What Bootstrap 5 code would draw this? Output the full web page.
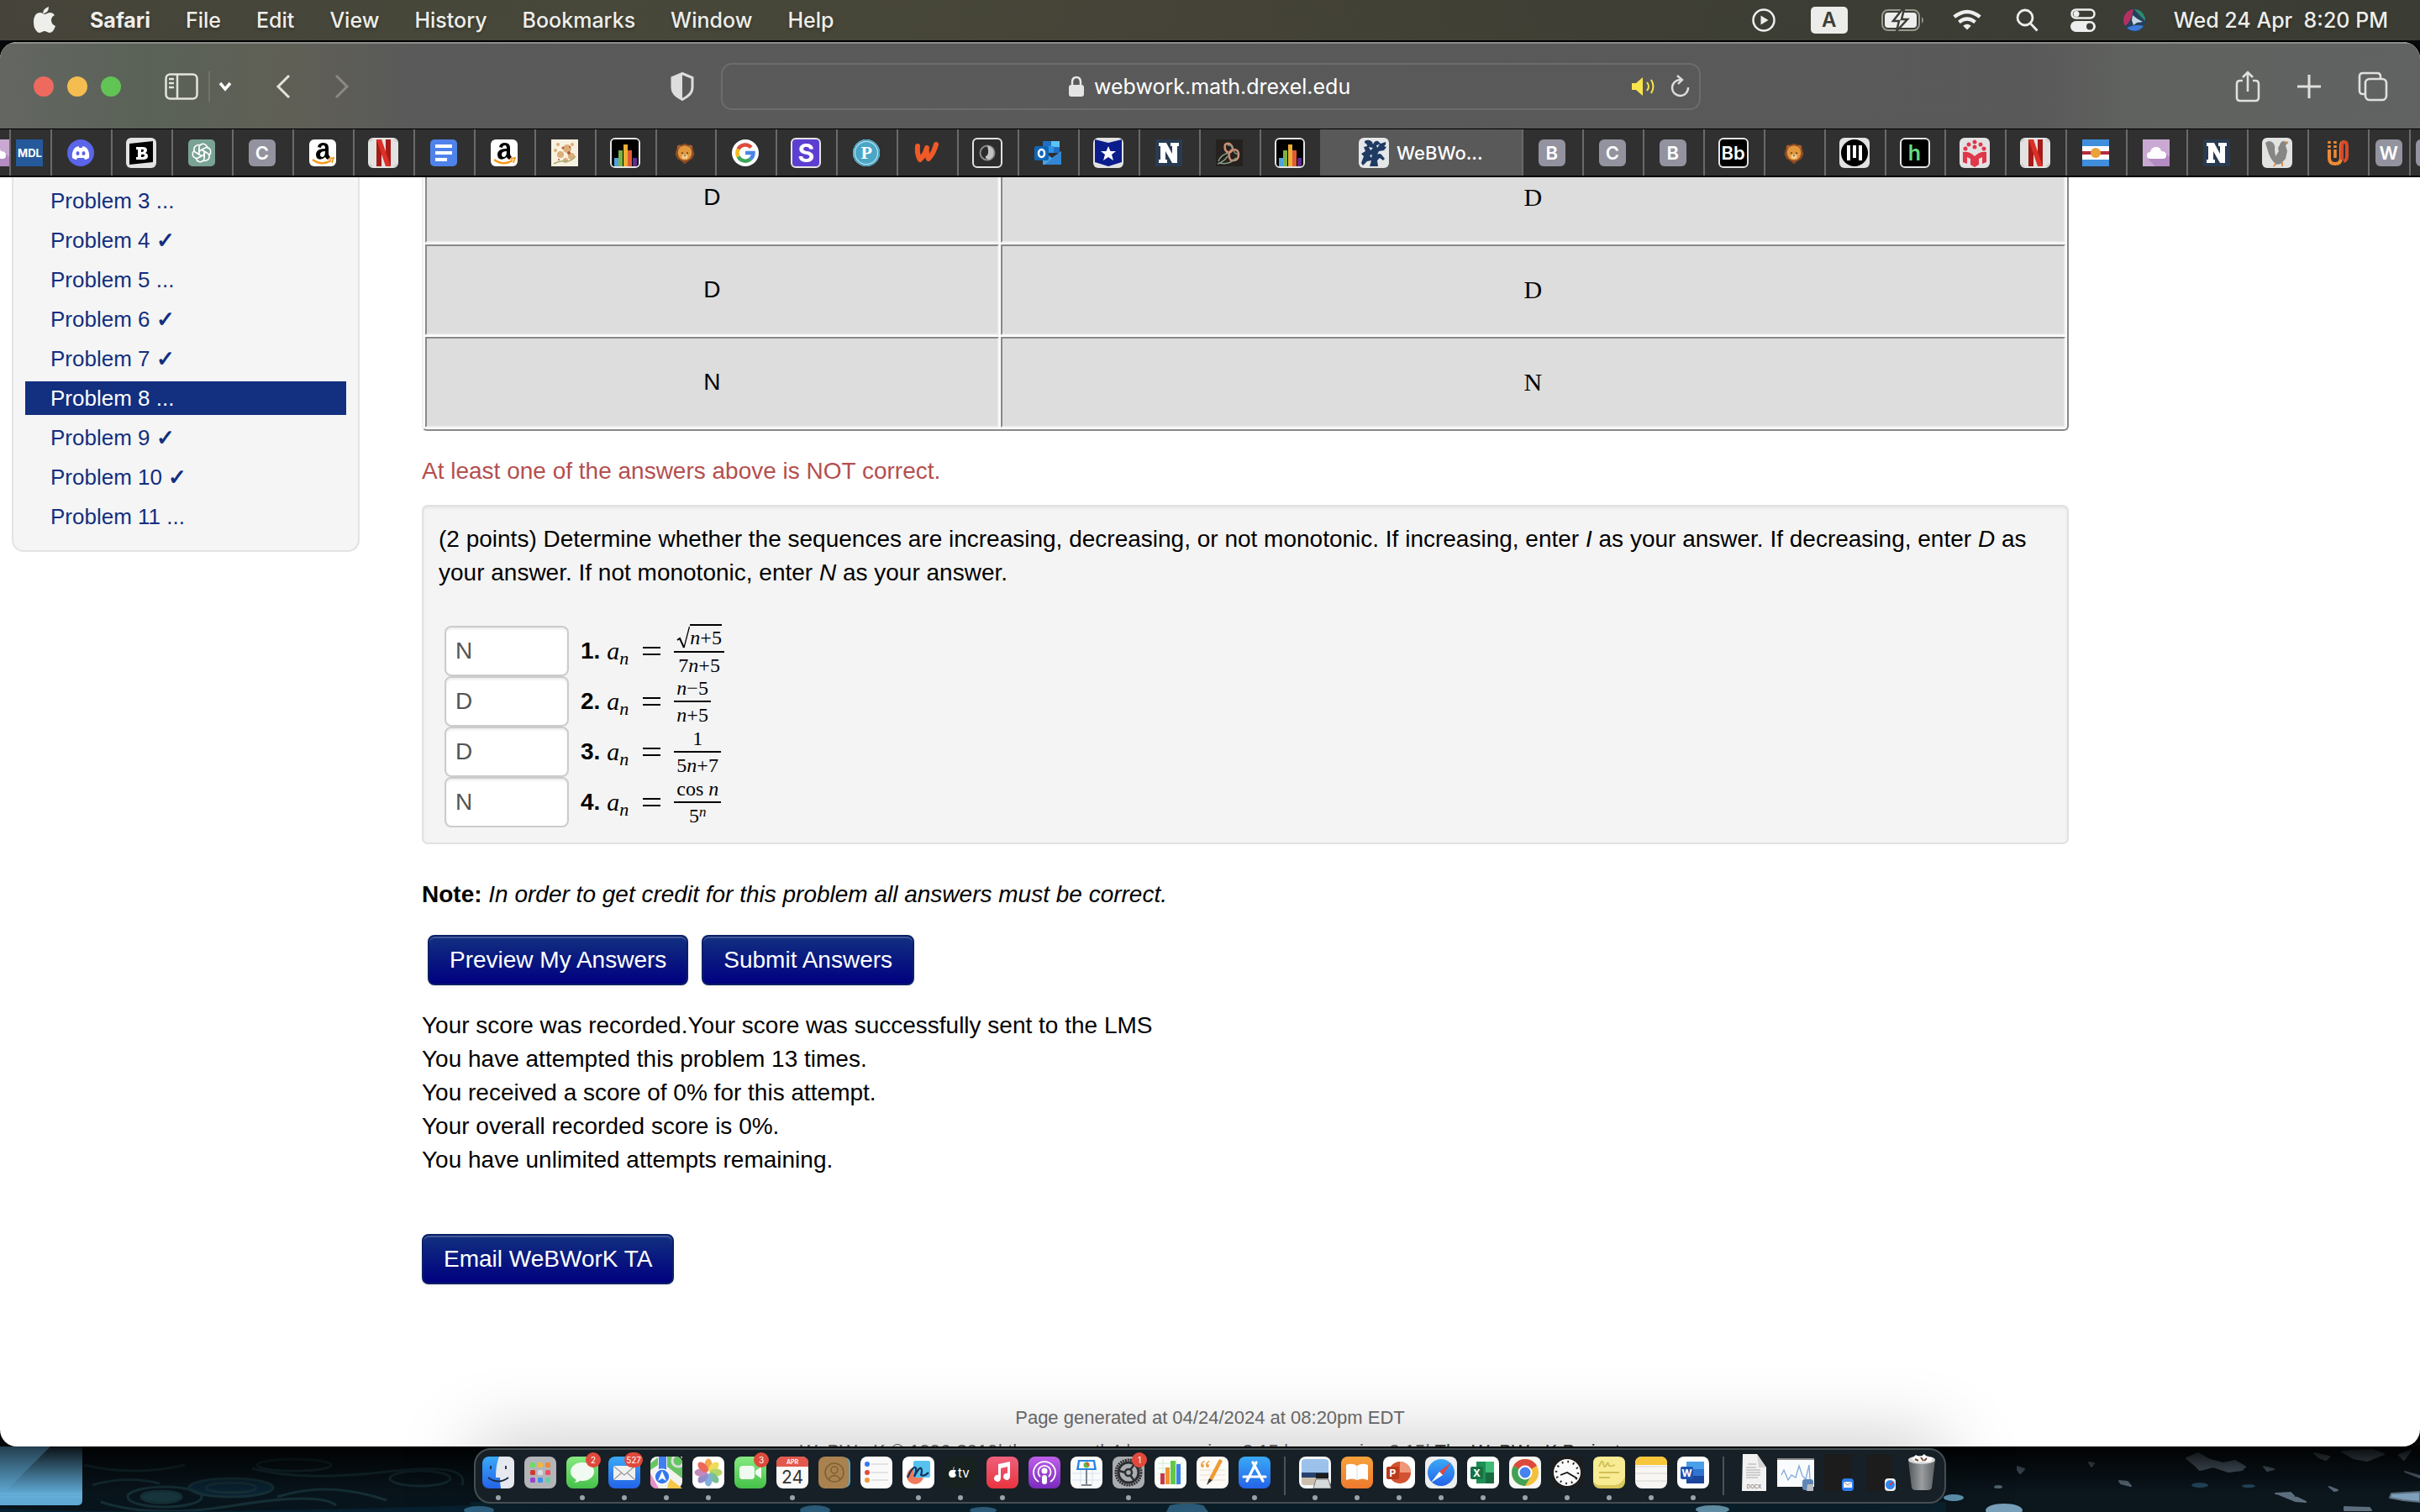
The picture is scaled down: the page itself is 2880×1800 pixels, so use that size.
<!DOCTYPE html>
<html lang="en">
<head>
<meta charset="utf-8">
<title>WeBWorK : Problem 8</title>
<meta name="viewport" content="width=device-width, initial-scale=1">
<link href="https://cdn.jsdelivr.net/npm/bootstrap@5.3.0/dist/css/bootstrap.min.css" rel="stylesheet">
<style>
html, body { height: 100%; }
body { overflow: hidden; background: #05090c; color: #000; font-family: "Liberation Sans", Arial, sans-serif; font-size: 28px; line-height: 40px; }
button { font: inherit; }
svg { display: block; }
.desk { height: 100vh; }
.chrome { font-family: Inter, "Liberation Sans", sans-serif; }
.bare { background: none; border: 0; padding: 0; color: inherit; text-decoration: none; }

/* menu bar */
.menubar { height: 48px; flex: none; padding: 0 38px 0 40px; color: #eeeeea; font-size: 25px; font-weight: 500; line-height: 46px; background: linear-gradient(90deg, #46443a 0, #47483a 25%, #454337 50%, #3c3d34 75%, #3b3d34 100%); text-shadow: 0 2px 4px rgba(0,0,0,.3); }
.menubar a { color: inherit; text-decoration: none; }
.menus { gap: 42px; margin-left: 41px; }
.inputsrc { width: 44px; height: 32px; margin-left: 42px; border-radius: 5px; background: #ececea; color: #3b3d34; font-size: 24px; line-height: 32px; font-weight: 600; text-align: center; text-shadow: none; }

/* browser window */
.win { border-radius: 20px; overflow: hidden; margin-top: 2px; min-height: 0; background: #fff; box-shadow: 0 0 0 2px #000; }
.toolbar { height: 104px; flex: none; padding: 0 38px 0 40px; color: #e4e4e2; border-top: 2px solid #8b8d8b; border-bottom: 1px solid #000; background: linear-gradient(90deg, #646662 0, #5a6257 6%, #605f56 12%, #5a5a5a 17%, #595959 84%, #60625f 88%, #606362 100%); }
.light { width: 24px; height: 24px; border-radius: 50%; }
.address { height: 56px; flex: 0 1 1166px; border: 2px solid #6c6c6c; border-radius: 13px; }
.address input { width: 312px; font-size: 25px; line-height: 40px; color: #fff; outline: 0; }
.tool-side { flex: 1 1 0; }
.tabbar { height: 57px; flex: none; background: #303030; border-bottom: 2px solid #000; overflow: hidden; }
.tb { flex: 72 1 0; min-width: 0; overflow: hidden; box-shadow: inset 2px 0 #6a6a6a; display: flex; align-items: center; justify-content: center; color: #fff; text-decoration: none; }
.tb.clip { flex-grow: 11; box-shadow: none; justify-content: flex-end; }
.tb.narrow { flex-grow: 49; }
.tb.clipend { flex-grow: 13; justify-content: flex-start; }
.tb.on { flex-grow: 240; background: #595959; box-shadow: none; font-size: 22px; font-weight: 500; gap: 9px; }
.ic { width: 32px; height: 32px; flex: none; border-radius: 6px; text-align: center; line-height: 32px; font-size: 22px; font-weight: 600; overflow: hidden; }
.ic.plate { width: 36px; height: 36px; border: 2px solid #e4e4e4; border-radius: 6px; }
.ic.gray { background: #9393a0; }

/* page */
.page { overflow: hidden; min-height: 0; }
.cols { padding: 0 418px 0 14px; gap: 74px; }
.probs { width: 414px; flex: none; background: #f5f5f5; border: 2px solid #e3e3e3; border-top: 0; border-radius: 0 0 14px 14px; padding: 8px 14px 20px; gap: 7px; font-size: 26px; }
.probs a { color: #122f80; text-decoration: none; padding-left: 30px; line-height: 40px; }
.probs a.now { background: #122f80; color: #fff; }
.work { margin-top: -34px; min-width: 0; }
.results { width: 100%; border: 2px solid; border-color: #eee #888 #888 #eee; border-collapse: separate; border-spacing: 2px; border-radius: 6px; margin-bottom: 28px; }
.results td { height: 108px; border: 2px solid; border-color: #888 #eee #eee #888; background: #ddd; text-align: center; vertical-align: middle; padding: 0; }
.results td:first-child { width: 35%; }
.results td.tex { font-family: "Liberation Serif", serif; font-size: 30px; }
.wrong { color: #b44f4f; margin-bottom: 20px; }
.question { background: #f4f4f4; border: 2px solid #e1e1e1; border-radius: 7px; box-shadow: inset 0 2px 3px rgba(0,0,0,.06); padding: 19px 18px 18px; }
.answers { margin: 43px 0 0 7px; }
.answer { height: 60px; gap: 14px; }
.answer input { width: 148px; height: 60px; border: 2px solid #ccc; border-radius: 8px; padding: 0 11px; font-size: 28px; color: #555; background: #fff; box-shadow: inset 0 2px 3px rgba(0,0,0,.08); }
.eq { font-family: "Liberation Serif", "Times New Roman", serif; font-size: 30px; }
.eq sub { font-size: 22px; bottom: 0; vertical-align: -6px; }
.eqsign { width: 21px; height: 10px; border: solid #000; border-width: 2px 0; margin: 0 16px 0 17px; }
.frac { font-family: "Liberation Serif", "Times New Roman", serif; font-size: 24px; line-height: 30px; text-align: center; }
.frac > span { display: block; padding: 0 3px; }
.frac > span + span { border-top: 2px solid #000; }
.frac sup { font-size: 17px; line-height: 0; top: -7px; }
.radicand { border-top: 2px solid #000; line-height: 28px; padding-bottom: 2px; }
.note { margin: 40px 0 28px; }
.actions { margin: 0 0 28px 7px; }
.mailta { margin-top: 68px; }
.navy { border: 2px solid #0b1f66; border-radius: 8px; height: 60px; padding: 0 24px; font-size: 28px; line-height: 56px; color: #fff; background: linear-gradient(#123080, #000080); box-shadow: inset 0 2px 0 rgba(255,255,255,.2), 0 2px 4px rgba(0,0,0,.06); }
.navy:hover { color: #fff; }
.foot { margin-top: 139px; color: #6c6c6c; font-size: 22px; text-align: center; }
.foot a { color: #444; text-decoration: none; }

/* wallpaper strip and dock */
.wall { height: 78px; flex: none; }
.wall svg { width: 100%; height: 78px; }
.dock { position: absolute; left: 50%; bottom: 10px; transform: translateX(-50%); height: 66px; padding: 0 2px; border: 2px solid #454e51; border-radius: 20px; background: #172026; box-shadow: 0 -4px 90px rgba(0,0,0,.26); }
.app { width: 50px; height: 62px; position: relative; display: flex; flex-direction: column; align-items: center; padding-top: 8px; }
.app.run::after { content: ""; width: 6px; height: 6px; border-radius: 50%; background: #9aa2a8; margin-top: 8px; }
.app svg { width: 38px; height: 38px; flex: none; }
.sep { width: 2px; height: 46px; margin: 8px 10px 0; background: #4a5357; }
.dot { position: absolute; top: 3px; right: 3px; height: 18px; min-width: 18px; border-radius: 9px; background: #e0493c; color: #fff; font-size: 10px; line-height: 18px; text-align: center; padding: 0 2px; }
</style>
<script src="https://cdn.jsdelivr.net/npm/bootstrap@5.3.0/dist/js/bootstrap.bundle.min.js"></script>
</head>
<body>
<svg width="0" height="0" class="position-absolute">
<defs>
<linearGradient id="gBlue" x2="0" y2="1"><stop stop-color="#3aa9f7"/><stop offset="1" stop-color="#2463e8"/></linearGradient>
<linearGradient id="gGreen" x2="0" y2="1"><stop stop-color="#86ea80"/><stop offset="1" stop-color="#46c14a"/></linearGradient>
<linearGradient id="gRed" x2="0" y2="1"><stop stop-color="#f0607c"/><stop offset="1" stop-color="#e8343f"/></linearGradient>
<linearGradient id="gPurple" x2="0" y2="1"><stop stop-color="#bf5fe8"/><stop offset="1" stop-color="#7a2bbd"/></linearGradient>
<linearGradient id="gOrange" x2="0" y2="1"><stop stop-color="#f7a13b"/><stop offset="1" stop-color="#ee7a2f"/></linearGradient>
<linearGradient id="gTrash"><stop stop-color="#55585a"/><stop offset=".5" stop-color="#9b9ea0"/><stop offset="1" stop-color="#5c5f61"/></linearGradient>
<linearGradient id="gShade" x2="0" y2="1"><stop stop-color="#000" stop-opacity=".9"/><stop offset="1" stop-color="#000" stop-opacity="0"/></linearGradient>
<symbol id="amazon" viewBox="0 0 32 32"><rect width="32" height="32" rx="6" fill="#fff"/><path d="M10 9q1-5 7-5 6 0 6 6v7q0 2 2 4l-3 3q-2-1-3-3-6 5-10 1-3-7 3-10 3-1 7-1 0-4-2-4-3 0-3 3zM19 14q-6 0-6 4 0 3 3 3 3-1 3-7z" fill="#000"/><path d="M4 24q11 8 22 1" fill="none" stroke="#f39a1e" stroke-width="2.4"/><path d="M23 23l6-1-2 6" fill="none" stroke="#f39a1e" stroke-width="1.8"/></symbol>
<symbol id="netflix" viewBox="0 0 32 32"><rect width="32" height="32" fill="#e2e2e0"/><path d="M8 0h6v32H8zM19 0h6v32h-6z" fill="#a51b18"/><path d="M8 0h6l11 32h-6z" fill="#dc2f27"/></symbol>
<symbol id="bars" viewBox="0 0 32 32"><rect width="32" height="32" fill="#000"/><path d="M3 22h5v10H3z" fill="#4ba3df"/><path d="M8 13h5v19H8z" fill="#7bb342"/><path d="M14 6h5v26h-5z" fill="#edae35"/><path d="M19 13h5v19h-5z" fill="#e05a35"/><path d="M25 22h5v10h-5z" fill="#5f2a91"/></symbol>
<symbol id="lion" viewBox="0 0 32 32"><path d="M16 3l5 2 5 2 2 6 1 5-3 6-5 3-5 4-5-4-5-3-3-6 1-5 2-6 5-2z" fill="#8e4a22"/><circle cx="8.500" cy="8" r="3" fill="#a85f2c"/><circle cx="23.500" cy="8" r="3" fill="#a85f2c"/><ellipse cx="16" cy="16" rx="9.500" ry="10" fill="#e2983f"/><circle cx="12.500" cy="16" r="1" fill="#3a2010"/><circle cx="19.500" cy="16" r="1" fill="#3a2010"/><ellipse cx="16" cy="21" rx="4" ry="3" fill="#f4cf91"/><path d="M14.500 19h3L16 21z" fill="#5a2f16"/></symbol>
<symbol id="nbox" viewBox="0 0 32 32"><rect width="32" height="32" fill="#293b52"/><path d="M4 4h9l7 13V8h-2V4h10v4h-2v20h-6L12 14v10h2v4H4v-4h2V8H4z" fill="#fff"/></symbol>
<symbol id="cloud" viewBox="0 0 32 32"><rect width="32" height="32" fill="#c9a9d2"/><path d="M25 15l7 6v11H15L6 23z" fill="#b48bc3"/><path d="M9 23q-4 0-4-4t4-4q1-6 7-6 5 0 6 5 6 0 6 5 0 4-4 4z" fill="#fff"/></symbol>
</defs>
</svg>

<div class="desk d-flex flex-column">
<header class="menubar chrome d-flex align-items-center justify-content-between">
  <nav class="d-flex align-items-center">
    <a href="#" aria-label="Apple"><svg width="26" height="32" viewBox="0 0 26 32" fill="#eeeeea"><path d="M18 0q0 4-2 6t-5 2q0-3 2-5t5-3zM13 9q1 0 3-1t4-1q3 0 5 3-4 2-4 6 0 5 5 7-1 3-3 6-2 2-4 2-1 0-3-1-2-1-3-1t-3 1-3 1q-3 0-6-6Q0 22 0 18q0-5 2-8 2-3 6-3 1 0 3 1z"/></svg></a>
    <div class="menus d-flex">
      <a href="#" class="fw-bold">Safari</a><a href="#">File</a><a href="#">Edit</a><a href="#">View</a><a href="#">History</a><a href="#">Bookmarks</a><a href="#">Window</a><a href="#">Help</a>
    </div>
  </nav>
  <div class="d-flex align-items-center">
    <svg width="28" height="28" viewBox="0 0 28 28"><circle cx="14" cy="14" r="12.500" fill="none" stroke="#eee" stroke-width="2.500"/><path d="M10.500 8.500l9 5.500-9 5.500z" fill="#eee"/></svg>
    <div class="inputsrc me-4">A</div>
    <svg class="ms-3" width="52" height="26" viewBox="0 0 52 26"><rect x="1" y="1" width="44" height="24" rx="7" fill="none" stroke="#99998f" stroke-width="2"/><rect x="4" y="4" width="38" height="18" rx="4" fill="#eee"/><path d="M48 9q4 4 0 8z" fill="#99998f"/><path d="M25 0L14 14h7l-3 12 13-14h-7l3-12z" fill="#eee" stroke="#3d3e36" stroke-width="2.500"/></svg>
    <svg class="mx-4 px-1" width="52" height="26" viewBox="-5 0 46 26" fill="none" stroke="#eee" stroke-width="4.500"><path d="M2 9q16-13 32 0M8 15.500q10-8 20 0"/><path d="M13 20q5-4 10 0l-5 5z" fill="#eee" stroke="none"/></svg>
    <svg class="ms-2 me-2" width="27" height="28" viewBox="0 0 27 28" fill="none" stroke="#eee" stroke-width="2.800"><circle cx="11" cy="11" r="9"/><path d="M17.500 18l8 8.500"/></svg>
    <svg class="ms-4 me-4" width="40" height="28" viewBox="-6 0 40 28"><rect x="1.500" y="1.500" width="27" height="10" rx="5" fill="none" stroke="#eee" stroke-width="2.500"/><circle cx="7" cy="6.500" r="3.500" fill="#eee"/><rect y="15" width="30" height="13" rx="6.500" fill="#eee"/><circle cx="23" cy="21.500" r="4" fill="#3d3e36"/></svg>
    <svg class="me-4" width="37" height="28" viewBox="-4 0 37 28"><circle cx="14" cy="14" r="13.500" fill="#23405e"/><path d="M13 1A13 13 0 0 0 3 21q7-4 10-20z" fill="#b5305e"/><path d="M14 1a13 13 0 0 1 13 14q-8-8-13-14z" fill="#2f8a6a"/><path d="M5 23a13 13 0 0 0 20-2q-9-3-20 2z" fill="#3c7bd8"/><path d="M12 8l5 4 7 4-7 1-4 3-2-6z" fill="#e3f2f8" opacity=".85"/></svg>
    <span class="ms-1">Wed 24 Apr&nbsp; 8:20 PM</span>
  </div>
</header>

<section class="win d-flex flex-column flex-grow-1">
  <div class="toolbar chrome d-flex align-items-center">
    <div class="tool-side d-flex align-items-center">
      <div class="d-flex gap-3">
        <button class="bare light" style="background:#ee6a5f" aria-label="Close"></button>
        <button class="bare light" style="background:#f5bd4f" aria-label="Minimise"></button>
        <button class="bare light" style="background:#61c454" aria-label="Zoom"></button>
      </div>
      <button class="bare ms-5 ps-1" aria-label="Sidebar"><svg width="84" height="36" viewBox="0 0 84 36" fill="none" stroke="#e4e4dc" stroke-width="2.500"><rect x="1.500" y="3.500" width="37" height="29" rx="5"/><path d="M15 4v28M5 9h6M5 14h6M5 19h6"/><path d="M53 0v36" stroke="#7a7a72" stroke-width="1.500"/><path d="M66 14l6 7 6-7" stroke="#fff" stroke-width="3.500"/></svg></button>
      <button class="bare ms-5" aria-label="Back"><svg width="18" height="30" viewBox="1 0 18 30" fill="none" stroke="#e4e4dc" stroke-width="3"><path d="M17 2L4 15l13 13"/></svg></button>
      <button class="bare ms-5 ps-1" aria-label="Forward"><svg width="18" height="30" viewBox="0 0 18 30" fill="none" stroke="#8a8a82" stroke-width="3"><path d="M2 2l13 13L2 28"/></svg></button>
      <button class="bare ms-auto me-4 pe-2" aria-label="Privacy report"><svg width="28" height="34" viewBox="0 0 28 34"><path d="M14 1.500l12 5v12q0 8-12 14-12-6-12-14v-12z" fill="none" stroke="#ddd" stroke-width="3"/><path d="M14 1.500v31q-12-6-12-14v-12z" fill="#ddd"/></svg></button>
    </div>
    <div class="address d-flex align-items-center">
      <div class="tool-side"></div>
      <svg width="18" height="26" viewBox="0 0 18 26"><path d="M4 12V8q0-6 5-6t5 6v4" fill="none" stroke="#e4e4e4" stroke-width="2.500"/><rect y="11" width="18" height="14" rx="3" fill="#e4e4e4"/></svg>
      <input class="bare ms-2 ps-1" type="text" value="webwork.math.drexel.edu" aria-label="Address">
      <div class="tool-side d-flex justify-content-end align-items-center">
        <button class="bare me-3" aria-label="Mute"><svg width="30" height="24" viewBox="0 0 30 24"><path d="M0 8h5l8-7v22l-8-7H0z" fill="#fae44c"/><path d="M18 7q4 5 0 10M23 4q5 8 0 16" fill="none" stroke="#fae44c" stroke-width="2"/></svg></button>
        <button class="bare me-2" aria-label="Reload"><svg width="26" height="28" viewBox="1 0 26 28" fill="none" stroke="#ddd" stroke-width="2.400"><path d="M13 6A9.500 9.500 0 1 0 22 15M9 1l6 5-5 5"/></svg></button>
      </div>
    </div>
    <div class="tool-side d-flex align-items-center justify-content-end">
      <button class="bare me-4" aria-label="Share"><svg width="50" height="38" viewBox="0 0 50 38" fill="none" stroke="#e0e0de" stroke-width="2.600"><path d="M9 12H6q-4 0-4 4v16q0 4 4 4h18q4 0 4-4V16q0-4-4-4h-3M15 25V3M9 8l6-6 6 6"/></svg></button>
      <button class="bare me-4" aria-label="New tab"><svg width="48" height="28" viewBox="0 0 48 28" stroke="#e0e0de" stroke-width="3"><path d="M14 0v28M0 14h28"/></svg></button>
      <button class="bare" aria-label="Tab overview"><svg width="36" height="36" viewBox="0 0 36 36" fill="none" stroke="#e0e0de" stroke-width="2.600"><rect x="9" y="9" width="25" height="25" rx="5"/><path d="M9 27H6q-4 0-4-4V6q0-4 4-4h17q4 0 4 4v3"/></svg></button>
    </div>
  </div>

  <nav class="tabbar chrome d-flex">
    <a href="#" class="tb clip" aria-label="Cloud"><svg class="ic rounded-0"><use href="#cloud"/></svg></a>
    <a href="#" class="tb narrow"><span class="ic rounded-0" style="background:#24599b;font-size:13px;font-weight:700">MDL</span></a>
    <a href="#" class="tb" aria-label="Discord"><svg width="32" height="32" viewBox="0 0 32 32"><circle cx="16" cy="16" r="16" fill="#5a65ea"/><path d="M9 10q3-2 4.500-2l1 2h3l1-2Q20 8 23 10q4 5 3 12-3 2-5 2l-1-2h-8l-1 2q-2 0-5-2Q5 15 9 10z" fill="#fff"/><ellipse cx="12.500" cy="16.500" rx="2" ry="2.500" fill="#5a65ea"/><ellipse cx="19.500" cy="16.500" rx="2" ry="2.500" fill="#5a65ea"/></svg></a>
    <a href="#" class="tb" aria-label="B"><svg width="36" height="36" viewBox="0 0 36 36"><rect width="36" height="36" rx="6" fill="#e2e2e2"/><path d="M4 7l28-3v25L4 32z" fill="#000"/><path d="M12 11h8q5 0 5 4 0 2-2 3 3 1 3 4 0 4-6 4h-8v-3h2v-9h-2zM18 14v3q3 0 3-2t-3-1zM18 20v3q4 0 4-2t-4-1z" fill="#fff"/></svg></a>
    <a href="#" class="tb" aria-label="ChatGPT"><svg width="32" height="32" viewBox="0 0 32 32"><rect width="32" height="32" rx="5" fill="#7aa396"/><g fill="none" stroke="#fff" stroke-width="1.600"><path id="pt" d="M13 14V8.500q2-4 6-3 3 1 4 4M13 14v4l-3-2"/><use href="#pt" transform="rotate(60 16 16)"/><use href="#pt" transform="rotate(120 16 16)"/><use href="#pt" transform="rotate(180 16 16)"/><use href="#pt" transform="rotate(240 16 16)"/><use href="#pt" transform="rotate(300 16 16)"/></g></svg></a>
    <a href="#" class="tb"><span class="ic gray">C</span></a>
    <a href="#" class="tb" aria-label="Amazon"><svg width="32" height="32"><use href="#amazon"/></svg></a>
    <a href="#" class="tb" aria-label="Netflix"><svg class="ic plate"><use href="#netflix"/></svg></a>
    <a href="#" class="tb" aria-label="Docs"><svg width="32" height="32" viewBox="0 0 32 32"><rect width="32" height="32" rx="5" fill="#4f82ea"/><path d="M6 8h20M6 16h20M6 24h14" stroke="#fff" stroke-width="4"/></svg></a>
    <a href="#" class="tb" aria-label="Amazon"><svg width="32" height="32"><use href="#amazon"/></svg></a>
    <a href="#" class="tb" aria-label="Art"><svg width="32" height="32" viewBox="0 0 32 32"><rect width="32" height="32" fill="#f7f2df"/><g fill="#dcae78"><circle cx="8" cy="6" r="2"/><circle cx="19" cy="11" r="5"/><circle cx="11" cy="18" r="4"/><circle cx="24" cy="20" r="4"/><circle cx="17" cy="25" r="3"/><circle cx="5" cy="13" r="2"/><circle cx="25" cy="6" r="2"/></g><g fill="#b8553f"><circle cx="14" cy="10" r="1.500"/><circle cx="21" cy="16" r="2"/><circle cx="9" cy="24" r="1"/><circle cx="22" cy="9" r="1"/></g><path d="M3 29q8-4 14-3t12-6" stroke="#a9ab72" stroke-width="1.500" fill="none"/></svg></a>
    <a href="#" class="tb" aria-label="Chart"><svg class="ic plate"><use href="#bars"/></svg></a>
    <a href="#" class="tb" aria-label="Lion"><svg width="28" height="28"><use href="#lion"/></svg></a>
    <a href="#" class="tb" aria-label="Google"><svg width="32" height="32" viewBox="0 0 32 32"><circle cx="16" cy="16" r="16" fill="#fff"/><g fill="none" stroke-width="4.500"><path d="M23 9.500A9.500 9.500 0 0 0 7.600 11.500" stroke="#dd4b3e"/><path d="M7.600 11.500a9.500 9.500 0 0 0 0 9" stroke="#f5bb1d"/><path d="M7.600 20.500A9.500 9.500 0 0 0 22 23.500" stroke="#3aa757"/><path d="M22 23.500q3.500-3 3.500-7.500H16" stroke="#4a86e8"/></g></svg></a>
    <a href="#" class="tb"><span class="ic plate" style="background:#5c3fd0;font-size:30px;font-weight:700">S</span></a>
    <a href="#" class="tb"><span class="ic rounded-circle" style="background:#4ba6c6;font-family:'Liberation Serif',serif;box-shadow:inset 0 0 0 2px #4ba6c6,inset 0 0 0 3px #cfe8f1">P</span></a>
    <a href="#" class="tb" aria-label="W"><svg width="30" height="28" viewBox="0 0 30 28" fill="none" stroke="#ef5a28" stroke-width="6" stroke-linecap="round" stroke-linejoin="round"><path d="M4 6q-1 10 3 16 6-6 8-14-1 8 2 13 6-6 9-17"/></svg></a>
    <a href="#" class="tb" aria-label="Moon"><svg width="36" height="36" viewBox="0 0 36 36"><rect x="1" y="1" width="34" height="34" rx="5" fill="#2c2c2c" stroke="#e2e2e2" stroke-width="2"/><circle cx="18" cy="18" r="8.500" fill="none" stroke="#8a8a8a" stroke-width="2"/><path d="M18 9.500a8.500 8.500 0 0 1 2 16.500q-5-1-4-4 5-1 2-12.500z" fill="#c4c4c4"/></svg></a>
    <a href="#" class="tb" aria-label="Outlook"><svg width="32" height="32" viewBox="0 0 32 32"><path d="M10 2h20v14H10z" fill="#1f6fc5"/><path d="M20 2h10v7H20z" fill="#5cc2f2"/><path d="M15 8h8v8h-8z" fill="#2f94e0"/><path d="M10 14l11 8 11-8v16H10z" fill="#4aa3e4"/><path d="M32 14v16H12z" fill="#3286d2"/><rect y="8" width="17" height="17" rx="2" fill="#1266b8"/><ellipse cx="8.500" cy="16.500" rx="3.500" ry="4.500" fill="none" stroke="#fff" stroke-width="2.500"/></svg></a>
    <a href="#" class="tb" aria-label="Star"><svg width="36" height="36" viewBox="0 0 36 36"><rect width="36" height="36" rx="6" fill="#e2e2e2"/><path d="M2 2l16 4 16-4v27l-16 5-16-5z" fill="#0b1c8c"/><path d="M18 10l2.500 6h6.500l-5 4 2 7-6-4-6 4 2-7-5-4h6.500z" fill="#fff"/></svg></a>
    <a href="#" class="tb" aria-label="N"><svg width="32" height="32"><use href="#nbox"/></svg></a>
    <a href="#" class="tb" aria-label="Art"><svg width="32" height="32" viewBox="0 0 32 32" fill="none"><rect width="32" height="32" fill="#24211e"/><path d="M11 6q5-3 8 2t-3 8q-7-2-5-10zM18 13q9-3 9 5t-9 7q-5-6 0-12z" stroke="#cf8d74" stroke-width="2.500"/><path d="M14 7q6-1 7 5t6 5M3 26q3-8 12-10M4 28q12 3 20-6M2 29q7-2 12-9" stroke="#8a9a86" stroke-width="1.500"/></svg></a>
    <a href="#" class="tb" aria-label="Chart"><svg class="ic plate"><use href="#bars"/></svg></a>
    <a href="#" class="tb on"><svg width="36" height="36" viewBox="0 0 36 36"><rect width="36" height="36" rx="6" fill="#e4e6e8"/><path d="M7 4q5-3 9 1l1 3q2-5 6-4l3 3 6-2q1 3-2 5l3 1-3 4-6 1-2 4q3-2 5 0l4 5-2 2-4-3-3 3 1 7H13l2-7-5 1-5 5-2-3 3-8-3-3 5-3-2-5 4-1q0-3-3-4z" fill="#1f3a63"/><path d="M12 11l5 1-3 3zM21 9l4-1-3 4zM13 21l3-1-1 4z" fill="#e4e6e8"/></svg>WeBWo...</a>
    <a href="#" class="tb"><span class="ic gray">B</span></a>
    <a href="#" class="tb"><span class="ic gray">C</span></a>
    <a href="#" class="tb"><span class="ic gray">B</span></a>
    <a href="#" class="tb"><span class="ic plate" style="background:#000">Bb</span></a>
    <a href="#" class="tb" aria-label="Lion"><svg width="28" height="28"><use href="#lion"/></svg></a>
    <a href="#" class="tb" aria-label="M"><svg width="36" height="36" viewBox="0 0 36 36"><rect width="36" height="36" rx="6" fill="#e2e2e2"/><circle cx="18" cy="18" r="16" fill="#000"/><path d="M11 9v18M18 9v15M25 9v18" stroke="#fff" stroke-width="4"/></svg></a>
    <a href="#" class="tb"><span class="ic plate" style="background:#000;color:#62dc85;font-size:25px">h</span></a>
    <a href="#" class="tb" aria-label="Mosaic"><svg width="36" height="36" viewBox="0 0 36 36"><rect width="36" height="36" rx="6" fill="#e2e2e2"/><g fill="#e0374b"><circle cx="18" cy="5" r="2.500"/><circle cx="11" cy="8" r="2.500"/><circle cx="25" cy="8" r="2.500"/><circle cx="18" cy="11" r="2.500"/><circle cx="7" cy="13" r="2.500"/><circle cx="29" cy="13" r="2.500"/><path d="M4 17q8-1 14 5 6-6 14-5v12l-5 2v-8l-4 2v7l-5 3-5-3v-7l-4-2v8l-5-2z"/></g></svg></a>
    <a href="#" class="tb" aria-label="Netflix"><svg class="ic plate"><use href="#netflix"/></svg></a>
    <a href="#" class="tb" aria-label="Flag"><svg width="32" height="32" viewBox="0 0 32 32"><path d="M0 0h32v32H0z" fill="#3f8fdd"/><path d="M0 8h32v16H0z" fill="#fff"/><path d="M0 14h32v4H0z" fill="#b32d40"/><circle cx="16" cy="16" r="6" fill="#e9a23c"/></svg></a>
    <a href="#" class="tb" aria-label="Cloud"><svg width="32" height="32"><use href="#cloud"/></svg></a>
    <a href="#" class="tb" aria-label="N"><svg width="32" height="32"><use href="#nbox"/></svg></a>
    <a href="#" class="tb" aria-label="Bird"><svg width="36" height="36" viewBox="0 0 36 36"><rect width="36" height="36" rx="6" fill="#e2e2e0"/><path d="M4 6q5-4 9 0 3 3 2 8l1 8 4-6q-2-4 1-7 1-5 5-5l5 2-3 3 2 7-2 9-6 6-5 1q-6-5-9-13z" fill="#868684"/><path d="M16 31l-2 3M24 29v5M28 5l3 1" stroke="#d9903f" stroke-width="2"/></svg></a>
    <a href="#" class="tb" aria-label="Flame"><svg width="30" height="32" viewBox="0 0 30 32" fill="none" stroke-width="4"><path d="M5 12v10q0 7 7 7t7-7V8q0-5 4-5" stroke="#ed8a35"/><path d="M20 24V8q0-5 3-5t3 5v12q0 5-4 6" stroke="#d6492b"/><path d="M5 2v3M12 2v3M5 7v3M12 7v3M12 12v10" stroke="#ed8a35" stroke-width="3.500"/></svg></a>
    <a href="#" class="tb narrow"><span class="ic gray">W</span></a>
    <a href="#" class="tb clipend" aria-label="Tab"><span class="ic gray ms-2"></span></a>
  </nav>

  <main class="page flex-grow-1">
    <div class="cols d-flex align-items-start">
      <nav class="probs d-flex flex-column" aria-label="Problems">
        <a href="#">Problem 3 ...</a>
        <a href="#">Problem 4 <b>✓</b></a>
        <a href="#">Problem 5 ...</a>
        <a href="#">Problem 6 <b>✓</b></a>
        <a href="#">Problem 7 <b>✓</b></a>
        <a href="#" class="now" aria-current="page">Problem 8 ...</a>
        <a href="#">Problem 9 <b>✓</b></a>
        <a href="#">Problem 10 <b>✓</b></a>
        <a href="#">Problem 11 ...</a>
      </nav>
      <div class="work flex-grow-1">
        <table class="results">
          <tbody>
            <tr><td>D</td><td class="tex">D</td></tr>
            <tr><td>D</td><td class="tex">D</td></tr>
            <tr><td>N</td><td class="tex">N</td></tr>
          </tbody>
        </table>
        <p class="wrong">At least one of the answers above is NOT correct.</p>
        <div class="question">
          <p class="mb-0">(2 points) Determine whether the sequences are increasing, decreasing, or not monotonic. If increasing, enter <i>I</i> as your answer. If decreasing, enter <i>D</i> as your answer. If not monotonic, enter <i>N</i> as your answer.</p>
          <div class="answers">
            <div class="answer d-flex align-items-center">
              <input type="text" id="a1" value="N">
              <label for="a1" class="d-flex align-items-center"><b class="me-2">1.</b><span class="eq"><i>a</i><sub><i>n</i></sub></span><span class="eqsign"></span><span class="frac"><span class="d-flex align-items-end"><svg width="16" height="30" viewBox="0 0 16 30" fill="none" stroke="#000"><path d="M1 17l3-2 5 11" stroke-width="2"/><path d="M9 26L15.500 1" stroke-width="1.300"/></svg><span class="radicand"><i>n</i>+5</span></span><span>7<i>n</i>+5</span></span></label>
            </div>
            <div class="answer d-flex align-items-center">
              <input type="text" id="a2" value="D">
              <label for="a2" class="d-flex align-items-center"><b class="me-2">2.</b><span class="eq"><i>a</i><sub><i>n</i></sub></span><span class="eqsign"></span><span class="frac"><span><i>n</i>−5</span><span><i>n</i>+5</span></span></label>
            </div>
            <div class="answer d-flex align-items-center">
              <input type="text" id="a3" value="D">
              <label for="a3" class="d-flex align-items-center"><b class="me-2">3.</b><span class="eq"><i>a</i><sub><i>n</i></sub></span><span class="eqsign"></span><span class="frac"><span>1</span><span>5<i>n</i>+7</span></span></label>
            </div>
            <div class="answer d-flex align-items-center">
              <input type="text" id="a4" value="N">
              <label for="a4" class="d-flex align-items-center"><b class="me-2">4.</b><span class="eq"><i>a</i><sub><i>n</i></sub></span><span class="eqsign"></span><span class="frac"><span>cos <i>n</i></span><span>5<sup><i>n</i></sup></span></span></label>
            </div>
          </div>
        </div>
        <p class="note"><b>Note:</b> <i>In order to get credit for this problem all answers must be correct.</i></p>
        <div class="actions d-flex gap-3">
          <button class="btn navy">Preview My Answers</button>
          <button class="btn navy">Submit Answers</button>
        </div>
        <div>Your score was recorded.Your score was successfully sent to the LMS</div>
        <div>You have attempted this problem 13 times.</div>
        <div>You received a score of 0% for this attempt.</div>
        <div>Your overall recorded score is 0%.</div>
        <div>You have unlimited attempts remaining.</div>
        <button class="btn navy mailta">Email WeBWorK TA</button>
      </div>
    </div>
    <footer class="foot">
      <div>Page generated at 04/24/2024 at 08:20pm EDT</div>
      <div>WeBWorK © 1996-2019| theme: math4 | ww_version: 2.15 | pg_version 2.15| <a href="#">The WeBWorK Project</a></div>
    </footer>
  </main>
</section>

<div class="wall">
<svg viewBox="0 0 2880 78" preserveAspectRatio="none">
  <rect width="2880" height="78" fill="#08141b"/>
  <g fill="none" stroke="#152e36" stroke-width="3">
    <ellipse cx="275" cy="49" rx="50" ry="11" fill="#0a2333"/><ellipse cx="275" cy="49" rx="30" ry="6"/><ellipse cx="192" cy="60" rx="24" ry="7" fill="#17343c"/><ellipse cx="196" cy="60" rx="44" ry="12"/><path d="M110 46q40-12 80-2M120 66q60 20 160 4t120 0M300 26q60 16 160 4t90 16M330 60q60-20 130 4M100 22q60 14 120 0"/><ellipse cx="500" cy="38" rx="36" ry="9"/><ellipse cx="350" cy="22" rx="44" ry="7"/>
  </g>
  <path d="M0 74q200 8 560-4v8H0z" fill="#062030"/>
  <path d="M560 66h1780v12H560z" fill="#0a212c"/>
  <path d="M2316 0h564v78h-564z" fill="#0b161d"/>
  <g fill="#2f6484">
    <ellipse cx="570" cy="76" rx="18" ry="5" /><ellipse cx="970" cy="76" rx="18" ry="6"/><path d="M1392 70q20-5 40 0l6 8h-50z"/><ellipse cx="1170" cy="76" rx="16" ry="4"/><ellipse cx="2038" cy="75" rx="20" ry="5" fill="#6a9bb4"/>
    <ellipse cx="2325" cy="61" rx="12" ry="4" fill="#5f93b0"/><ellipse cx="2385" cy="76" rx="22" ry="8" fill="#79a0ba"/>
  </g>
  <g fill="#5c6e7d" stroke="#5c6e7d" stroke-width="2" stroke-linejoin="round">
    <path d="M2602 14l14-6 14 8 16 4 14-3 12 7-4 4-16 2-18-6-16 4-6-6z"/><path d="M2787 6l36-2 14 5-20 8-16-3z"/><path d="M2710 56l24 5 10 5-12-1zM2708 56l18-1 4 4z"/><path d="M2846 56l34-2v12l-20-2-16-3z" fill="#7d9fba"/><path d="M2790 72l30 1 2 3h-32z"/><path d="M2522 41l10 1 4 5-12-3zM2401 24l8 3-5 5-3-4zM2754 8l18 4-4 4-8-3zM2855 10l14-5-8 11zM2772 48l10 4-4 1zM2486 19l6 1-3 4zM2694 24l12 3-8 2zM2862 30l18 5v2z"/>
    <ellipse cx="2378" cy="48" rx="4" ry="1"/><ellipse cx="2676" cy="47" rx="8" ry="2" fill="#274b62" stroke="none"/><ellipse cx="2618" cy="46" rx="10" ry="3" fill="#274b62" stroke="none"/>
  </g>
  <path d="M0 0h98v64q0 6-6 6H0z" fill="#5fa9d4"/><path d="M0 56h98M0 60h98" stroke="#6db3dc" stroke-width="1"/>
  <rect width="2880" height="56" fill="url(#gShade)"/>
  <path d="M0 0h60L0 60z" fill="#5fa9d4" opacity=".3"/>
</svg>
</div>

<nav class="dock chrome d-flex" aria-label="Dock">
  <a href="#" class="app run" aria-label="Finder"><svg viewBox="0 0 38 38"><rect width="38" height="38" rx="8" fill="url(#gBlue)"/><path d="M20 0h10q8 0 8 8v22q0 8-8 8h-8q-1-6-1-13h-5Q16 10 20 0z" fill="#e6e9ef"/><path d="M10 11v4M28 11v4M7 25q12 9 24 0" fill="none" stroke="#1d2a3a" stroke-width="1.800"/></svg></a>
  <a href="#" class="app" aria-label="Launchpad"><svg viewBox="0 0 38 38"><rect width="38" height="38" rx="8" fill="#b3b5b9"/><g><rect x="7" y="7" width="6" height="6" rx="1.500" fill="#6fdc5f"/><rect x="16" y="7" width="6" height="6" rx="1.500" fill="#f3b73e"/><rect x="25" y="7" width="6" height="6" rx="1.500" fill="#ee8a32"/><rect x="7" y="16" width="6" height="6" rx="1.500" fill="#cf3b32"/><rect x="16" y="16" width="6" height="6" rx="1.500" fill="#d8dadd"/><rect x="25" y="16" width="6" height="6" rx="1.500" fill="#ef4f62"/><rect x="7" y="25" width="6" height="6" rx="1.500" fill="#9a45cf"/><rect x="16" y="25" width="6" height="6" rx="1.500" fill="#3f8df0"/><rect x="25" y="25" width="6" height="6" rx="1.500" fill="#66d1a6"/></g></svg></a>
  <a href="#" class="app run" aria-label="Messages"><svg viewBox="0 0 38 38"><rect width="38" height="38" rx="8" fill="url(#gGreen)"/><ellipse cx="19" cy="18" rx="14" ry="11" fill="#f1faf0"/><path d="M12 26q0 4-3 5 5 0 8-3z" fill="#f1faf0"/></svg><span class="dot">2</span></a>
  <a href="#" class="app run" aria-label="Mail"><svg viewBox="0 0 38 38"><rect width="38" height="38" rx="8" fill="url(#gBlue)"/><rect x="6" y="11" width="26" height="17" rx="2" fill="#f0f1f2"/><path d="M7 12l12 10 12-10M7 27l9-8M31 27l-9-8" fill="none" stroke="#999" stroke-width="1.200"/></svg><span class="dot">527</span></a>
  <a href="#" class="app run" aria-label="Maps"><svg viewBox="0 0 38 38"><rect width="38" height="38" rx="8" fill="#f2f1ee"/><path d="M20 0h10q8 0 8 8v18L20 12zM0 8v8l9-6V1z" fill="#66c462"/><path d="M20 38l3-12 15 12z" fill="#f5c84b"/><path d="M0 20l10 18H8q-8 0-8-8z" fill="#e58fc7"/><path d="M10 0h9v20h-9z" fill="#3f7ff0"/><circle cx="33" cy="5" r="7" fill="none" stroke="#ddd" stroke-width="3"/><circle cx="14" cy="24" r="9" fill="#3478f0" stroke="#fff" stroke-width="1.500"/><path d="M14 17l5 12-5-3-5 3z" fill="#fff"/></svg></a>
  <a href="#" class="app run" aria-label="Photos"><svg viewBox="0 0 38 38"><rect width="38" height="38" rx="8" fill="#fff"/><g opacity=".85"><ellipse cx="19" cy="10" rx="4.500" ry="7.500" fill="#f39b2b"/><ellipse cx="19" cy="10" rx="4.500" ry="7.500" fill="#ecd63b" transform="rotate(45 19 19)"/><ellipse cx="19" cy="10" rx="4.500" ry="7.500" fill="#a9cf4b" transform="rotate(90 19 19)"/><ellipse cx="19" cy="10" rx="4.500" ry="7.500" fill="#62b583" transform="rotate(135 19 19)"/><ellipse cx="19" cy="10" rx="4.500" ry="7.500" fill="#6ba3d8" transform="rotate(180 19 19)"/><ellipse cx="19" cy="10" rx="4.500" ry="7.500" fill="#7f78c0" transform="rotate(225 19 19)"/><ellipse cx="19" cy="10" rx="4.500" ry="7.500" fill="#b874b0" transform="rotate(270 19 19)"/><ellipse cx="19" cy="10" rx="4.500" ry="7.500" fill="#e8503e" transform="rotate(315 19 19)"/></g></svg></a>
  <a href="#" class="app" aria-label="FaceTime"><svg viewBox="0 0 38 38"><rect width="38" height="38" rx="8" fill="url(#gGreen)"/><rect x="6" y="11" width="18" height="16" rx="4" fill="#f1faf0"/><path d="M25 17l7-5v14l-7-5z" fill="#f1faf0"/></svg><span class="dot">3</span></a>
  <a href="#" class="app run" aria-label="Calendar"><svg viewBox="0 0 38 38"><rect width="38" height="38" rx="8" fill="#fafafa"/><path d="M0 12V8q0-8 8-8h22q8 0 8 8v4z" fill="#e2584d"/><text x="19" y="9" font-size="7" font-weight="600" fill="#fff" text-anchor="middle">APR</text><text x="19" y="32" font-size="21" fill="#333" text-anchor="middle">24</text></svg></a>
  <a href="#" class="app" aria-label="Contacts"><svg viewBox="0 0 38 38"><rect x="4" y="1" width="34" height="36" rx="7" fill="#5aa8c8"/><rect width="36" height="38" rx="8" fill="#a9824f"/><g fill="none" stroke="#7f5f35" stroke-width="1.500"><circle cx="19" cy="19" r="11"/><circle cx="19" cy="16" r="4"/><path d="M12 27q7-9 14 0"/></g></svg></a>
  <a href="#" class="app" aria-label="Reminders"><svg viewBox="0 0 38 38"><rect width="38" height="38" rx="8" fill="#fafafa"/><path d="M13 9h20M13 19h20M13 28h20" stroke="#ccc" stroke-width="1.200"/><circle cx="8" cy="9" r="3" fill="#3478f0"/><circle cx="8" cy="19" r="3" fill="#e34b3f"/><circle cx="8" cy="28" r="3" fill="#f0983a"/></svg></a>
  <a href="#" class="app run" aria-label="Freeform"><svg viewBox="0 0 38 38"><rect width="38" height="38" rx="8" fill="#fff"/><circle cx="15" cy="23" r="10" fill="#f07a5b"/><rect x="13" y="5" width="20" height="20" rx="2" fill="#55c3ee"/><path d="M6 25q6-13 9-12t-1 11q6-12 8-10t0 8q4 2 9-3" fill="none" stroke="#17335c" stroke-width="2.200"/></svg></a>
  <a href="#" class="app run" aria-label="TV"><svg viewBox="0 0 38 38"><rect width="38" height="38" rx="8" fill="#17211f"/><path d="M12 12q0 2-2 3 0-2 2-3zM9 16l2-.500q2 0 3 1.500-3 2 0 5-1 3-3 3h-3q-3-1-3-5 1-4 4-4z" fill="#fff"/><text x="16" y="25" font-size="15" fill="#fff">tv</text></svg></a>
  <a href="#" class="app run" aria-label="Music"><svg viewBox="0 0 38 38"><rect width="38" height="38" rx="8" fill="url(#gRed)"/><path d="M14 9l14-3v18a4 4 0 1 1-3-4v-8l-8 2v12a4 4 0 1 1-3-4z" fill="#fff"/></svg></a>
  <a href="#" class="app" aria-label="Podcasts"><svg viewBox="0 0 38 38"><rect width="38" height="38" rx="8" fill="url(#gPurple)"/><g fill="none" stroke="#fff" stroke-width="1.800"><path d="M12 30a13 13 0 1 1 14 0M14 24a7.500 7.500 0 1 1 10 0"/></g><circle cx="19" cy="17" r="3.500" fill="#fff"/><rect x="16" y="22" width="6" height="11" rx="3" fill="#fff"/></svg></a>
  <a href="#" class="app" aria-label="Keynote"><svg viewBox="0 0 38 38"><rect width="38" height="38" rx="8" fill="#fafbfc"/><path d="M2 20h34M2 28h34M12 16v20M26 16v20" stroke="#d5e2ef"/><path d="M9 4h20l2 12H7z" fill="#2a86e0"/><path d="M11 6h16l1 8H10z" fill="#fff"/><circle cx="19" cy="10" r="3.500" fill="#5cb84e"/><path d="M19 10V6.500a3.500 3.500 0 0 1 3 5z" fill="#e5533d"/><path d="M19 16v18M13 34h12" stroke="#7d8790" stroke-width="2"/></svg></a>
  <a href="#" class="app run" aria-label="Settings"><svg viewBox="0 0 38 38"><rect width="38" height="38" rx="8" fill="#a9acb0"/><g fill="none" stroke="#2c2e30"><circle cx="19" cy="19" r="15" stroke-width="3" stroke-dasharray="2 1"/><circle cx="19" cy="19" r="12" stroke-width="3"/><circle cx="19" cy="19" r="4" stroke-width="2.500"/><path d="M15 19L8 17M21 16l5-7M21 22l5 7" stroke-width="2.500"/></g></svg><span class="dot">1</span></a>
  <a href="#" class="app" aria-label="Numbers"><svg viewBox="0 0 38 38"><rect width="38" height="38" rx="8" fill="#fbfdfb"/><path d="M4 8h30M4 14h30M4 20h30M4 26h30M10 3v32M26 3v32" stroke="#d5ead2"/><path d="M7 20h5v13H7z" fill="#c93a4a"/><path d="M13 13h5v20h-5z" fill="#ef9232"/><path d="M19 5h6v28h-6z" fill="#63c843"/><path d="M26 9h5v24h-5z" fill="#3c82e6"/></svg></a>
  <a href="#" class="app" aria-label="Pages"><svg viewBox="0 0 38 38"><rect width="38" height="38" rx="8" fill="#fcfbf8"/><path d="M4 16h30M4 22h30M4 28h30" stroke="#f0ddc6"/><path d="M9 5q-4 2-4 5 0 3 2 3t2-2-2-2q0-2 3-3zM15 5q-4 2-4 5 0 3 2 3t2-2-2-2q0-2 3-3z" fill="#f0a13c"/><path d="M27 3l4 2-12 23-4-2z" fill="#f09a2f"/><path d="M15 26l4 2-7 6z" fill="#333"/></svg></a>
  <a href="#" class="app run" aria-label="App Store"><svg viewBox="0 0 38 38"><rect width="38" height="38" rx="8" fill="url(#gBlue)"/><path d="M21 7L10 29M17 7l12 22M6 24h26" stroke="#fff" stroke-width="3.200" stroke-linecap="round"/></svg></a>
  <div class="sep"></div>
  <a href="#" class="app run" aria-label="Preview"><svg viewBox="0 0 38 38"><rect width="38" height="38" rx="8" fill="#f4f6f8"/><rect x="3" y="3" width="32" height="31" rx="4" fill="#9cc2ec"/><path d="M3 19h32v6H3z" fill="#27436d"/><path d="M3 25h32v6q0 3-4 3H7q-4 0-4-3z" fill="#cdbfae"/><path d="M20 20h15v6H20z" fill="#1b1c1e"/><path d="M20 27h15l3 11H17z" fill="#d7dadc" stroke="#777"/></svg></a>
  <a href="#" class="app run" aria-label="Books"><svg viewBox="0 0 38 38"><rect width="38" height="38" rx="8" fill="url(#gOrange)"/><path d="M19 11q-6-4-13-1v18q7-3 13 0 6-3 13 0V10q-7-3-13 1z" fill="#fff"/><path d="M19 11v17" stroke="#ddd"/></svg></a>
  <a href="#" class="app run" aria-label="PowerPoint"><svg viewBox="0 0 38 38"><rect width="38" height="38" rx="8" fill="#fff"/><circle cx="20" cy="19" r="13" fill="#d35230"/><path d="M20 6a13 13 0 0 1 13 13H20z" fill="#f0977a"/><rect x="4" y="12" width="15" height="15" rx="2" fill="#b93a1c"/><text x="11.500" y="24" font-size="12" font-weight="700" fill="#fff" text-anchor="middle">P</text></svg></a>
  <a href="#" class="app run" aria-label="Safari"><svg viewBox="0 0 38 38"><rect width="38" height="38" rx="8" fill="#eceef0"/><circle cx="19" cy="19" r="16" fill="url(#gBlue)"/><path d="M31 7L21 22l-4-4z" fill="#e5453b"/><path d="M7 31l10-13 4 4z" fill="#fff"/></svg></a>
  <a href="#" class="app run" aria-label="Excel"><svg viewBox="0 0 38 38"><rect width="38" height="38" rx="8" fill="#fff"/><path d="M11 6h11v26H11z" fill="#1d8f55"/><path d="M22 6h10v13H22z" fill="#3fbd78"/><path d="M22 19h10v13H22z" fill="#176b3e"/><rect x="4" y="12" width="15" height="15" rx="2" fill="#177245"/><text x="11.500" y="24" font-size="12" font-weight="700" fill="#fff" text-anchor="middle">X</text></svg></a>
  <a href="#" class="app run" aria-label="Chrome"><svg viewBox="0 0 38 38"><rect width="38" height="38" rx="8" fill="#f6f6f6"/><circle cx="19" cy="19" r="16" fill="#f4c13d"/><path d="M19 19L5.200 11A16 16 0 0 1 33 11z" fill="#dc4a3d"/><path d="M5.200 11A16 16 0 0 0 19 35l7-12-7-4z" fill="#3fa257"/><circle cx="19" cy="19" r="7.500" fill="#4583ee" stroke="#fff" stroke-width="2"/></svg></a>
  <a href="#" class="app run" aria-label="Clock"><svg viewBox="0 0 38 38"><rect width="38" height="38" rx="8" fill="#1c1d1f"/><circle cx="19" cy="19" r="16" fill="#fafafa"/><circle cx="19" cy="19" r="13" fill="none" stroke="#222" stroke-width="2.500" stroke-dasharray="1.800 5"/><path d="M11 22l8-3 12 7" fill="none" stroke="#111" stroke-width="1.800"/></svg></a>
  <a href="#" class="app run" aria-label="Stickies"><svg viewBox="0 0 38 38"><rect y="4" width="38" height="34" rx="8" fill="#d9c85c"/><path d="M8 0h22q8 0 8 8v16q-4 9-12 10H8q-8 0-8-8V8q0-8 8-8z" fill="#f7eb93"/><path d="M7 12q4-10 5-4t3 3q3-6 3-2t8 1M7 19h24M7 25h13" fill="none" stroke="#d1be59" stroke-width="1.800"/></svg></a>
  <a href="#" class="app run" aria-label="Notes"><svg viewBox="0 0 38 38"><rect width="38" height="38" rx="8" fill="#f7f6f3"/><path d="M0 10V8q0-8 8-8h22q8 0 8 8v2z" fill="#f8c63a"/><path d="M0 12h38" stroke="#bbb" stroke-dasharray="1 1"/><path d="M0 20h38M0 29h38" stroke="#d8d6d2"/></svg></a>
  <a href="#" class="app run" aria-label="Word"><svg viewBox="0 0 38 38"><rect width="38" height="38" rx="8" fill="#fff"/><path d="M11 6h21v9H11z" fill="#4aa0e8"/><path d="M11 15h21v9H11z" fill="#2f74d0"/><path d="M11 23h21v9H11z" fill="#1c459c"/><rect x="4" y="12" width="15" height="15" rx="2" fill="#2053b0"/><text x="11.500" y="24" font-size="12" font-weight="700" fill="#fff" text-anchor="middle">W</text></svg></a>
  <div class="sep"></div>
  <a href="#" class="app pt-1" aria-label="Document"><svg style="height:46px" viewBox="0 0 38 46"><path d="M6 1h17l11 16v28H5z" fill="#f2f2f2"/><path d="M23 1l11 16h-9z" fill="#d4d4d4"/><path d="M12 13h10M10 17h12M10 20h17M10 23h17M10 26h17M10 29h14" stroke="#aaa"/><text x="19.500" y="42" font-size="6" fill="#666" text-anchor="middle">DOCX</text></svg></a>
  <a href="#" class="app" aria-label="Chart"><svg style="width:46px;height:42px" viewBox="0 0 46 42"><path d="M1 2h44v34H1z" fill="#fafbfc"/><path d="M1 2h44v2H1z" fill="#888"/><path d="M6 22l3-6 5 12 4-6 5 3 4-14 4 12 4 4 4-17 1 18" fill="none" stroke="#7ea9dc" stroke-width="1.300"/><rect x="31" y="27" width="13" height="13" rx="3" fill="#5f86b8"/><path d="M37 33h7v8h-8z" fill="#b9bcc0"/></svg></a>
  <a href="#" class="app pt-1" aria-label="Mail window"><svg style="height:46px" viewBox="0 0 38 46"><path d="M2 1h34v44H2z" fill="#1c1c1d"/><rect x="24" y="30" width="14" height="15" rx="4" fill="#2c7ef0"/><path d="M26 34h10v7H26z" fill="#f1f1f1"/><path d="M26 34l5 4 5-4" fill="none" stroke="#999"/></svg></a>
  <a href="#" class="app pt-1" aria-label="Safari window"><svg style="height:46px" viewBox="0 0 38 46"><path d="M4 1h30v44H4z" fill="#1c1c1d"/><rect x="25" y="30" width="13" height="15" rx="4" fill="#eef0f2"/><circle cx="31.500" cy="37.500" r="5.500" fill="#2f86ee"/><path d="M35 34l-3 4-1-1z" fill="#e33" stroke="#e33"/></svg></a>
  <a href="#" class="app pt-1" aria-label="Trash"><svg style="height:46px" viewBox="0 0 38 46"><path d="M3 8h32l-4 33q-1 3-5 3H12q-4 0-5-3z" fill="url(#gTrash)"/><ellipse cx="19" cy="8" rx="16" ry="5" fill="#d5d7d8"/><path d="M7 7l5-5 5 3 5-4 4 4 6 0-2 5-6 1-5-1-6 1z" fill="#fff"/><path d="M11 7l4 2M18 5l3 4M25 6l-3 3" stroke="#7a4a3a" stroke-width="2"/></svg></a>
</nav>
</div>
</body>
</html>
